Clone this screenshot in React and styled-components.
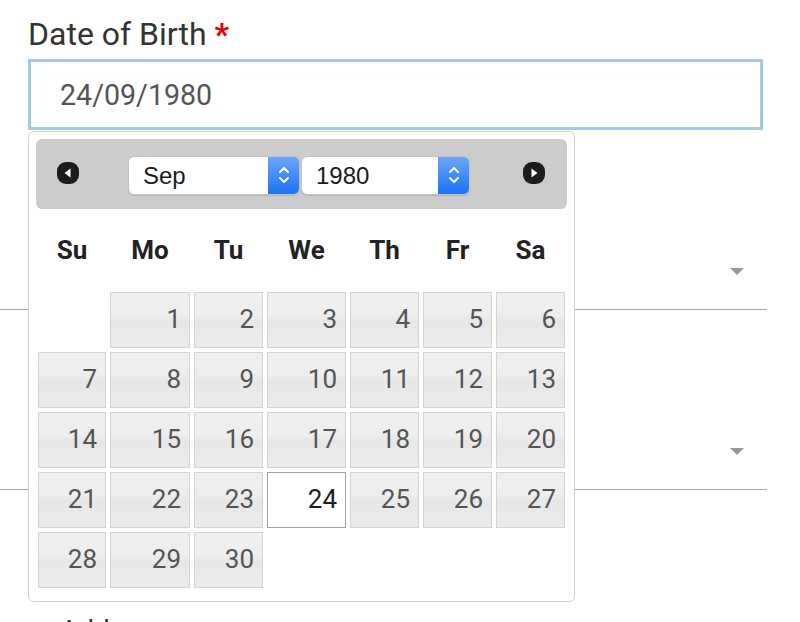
import styled, { createGlobalStyle } from "styled-components";

const GlobalStyle = createGlobalStyle`
  html, body {
    margin: 0;
    padding: 0;
    background: #fff;
    overflow: hidden;
  }
  body {
    font-family: Roboto, "Liberation Sans", sans-serif;
  }
`;

const days = [
    null, 1, 2, 3, 4, 5, 6,
    7, 8, 9, 10, 11, 12, 13,
    14, 15, 16, 17, 18, 19, 20,
    21, 22, 23, 24, 25, 26, 27,
    28, 29, 30,
];

const weekdays = ["Su", "Mo", "Tu", "We", "Th", "Fr", "Sa"];

const Arrow = ({ dir }) => (
    <svg width="22" height="22" viewBox="0 0 22 22">
        <rect x="0" y="0" width="22" height="22" rx="9" fill="#1c1c1c" />
        {dir === "prev"
            ? <path d="M7.5 11 L13.5 6.5 L13.5 15.5 Z" fill="#fff" />
            : <path d="M14.5 11 L8.5 6.5 L8.5 15.5 Z" fill="#fff" />}
    </svg>
);

const Stepper = () => (
    <svg width="14" height="24" viewBox="0 0 14 24" fill="none" stroke="#fff" strokeWidth="2" strokeLinecap="round" strokeLinejoin="round">
        <path d="M3 9 L7 5 L11 9" />
        <path d="M3 15 L7 19 L11 15" />
    </svg>
);

export default function App() {
    return (
        <Page>
            <GlobalStyle />
            <Label>Date of Birth <Required>*</Required></Label>
            <DateInput>24/09/1980</DateInput>

            <Field><Caret /></Field>
            <Field><Caret /></Field>
            <NextLabel>Address</NextLabel>

            <Picker>
                <PickerHeader>
                    <NavButton><Arrow dir="prev" /></NavButton>
                    <Selects>
                        <Select $width={172}>
                            <SelectText>Sep</SelectText>
                            <SelectStep><Stepper /></SelectStep>
                        </Select>
                        <Select $width={169}>
                            <SelectText>1980</SelectText>
                            <SelectStep><Stepper /></SelectStep>
                        </Select>
                    </Selects>
                    <NavButton><Arrow dir="next" /></NavButton>
                </PickerHeader>

                <WeekRow>
                    {weekdays.map(w => <WeekDay key={w}>{w}</WeekDay>)}
                </WeekRow>

                <DayGrid>
                    {days.map((d, i) => d === null
                        ? <Blank key={i} />
                        : <Day key={i} $current={d === 24}>{d}</Day>)}
                </DayGrid>
            </Picker>
        </Page>
    );
}

const Page = styled.div`
    position: relative;
    width: 800px;
    height: 622px;
    padding-top: 14px;
    box-sizing: border-box;
`

const Label = styled.div`
    margin-left: 28px;
    font-size: 32px;
    line-height: 41px;
    color: #333;
    height: 45px;
`

const Required = styled.span`
    color: #e60000;
    font-weight: bold;
`

const DateInput = styled.div`
    margin-left: 28px;
    width: 735px;
    height: 71px;
    box-sizing: border-box;
    border: 3px solid #a4c8e6;
    padding-left: 29px;
    display: flex;
    align-items: center;
    font-size: 28.6px;
    color: #555;
`

const Field = styled.div`
    width: 767px;
    height: 180px;
    border-bottom: 1px solid #a8a8a8;
    display: flex;
    justify-content: flex-end;
    align-items: flex-end;
    padding: 0 23px 34px 0;
    box-sizing: border-box;
`

const Caret = styled.div`
    width: 0;
    height: 0;
    border-left: 7px solid transparent;
    border-right: 7px solid transparent;
    border-top: 7px solid #999;
`

const NextLabel = styled.div`
    margin: 124px 0 0 60px;
    font-size: 28px;
    color: #333;
`

const Picker = styled.div`
    position: absolute;
    left: 28px;
    top: 131px;
    width: 547px;
    height: 471px;
    box-sizing: border-box;
    background: #fff;
    border: 1px solid #d0d0d0;
    border-radius: 6px;
    padding: 7px;
`

const PickerHeader = styled.div`
    height: 70px;
    background: #cccccc;
    border-radius: 6px;
    display: flex;
    align-items: center;
    justify-content: space-between;
    padding: 2px 22px 0 21px;
    box-sizing: border-box;
`

const NavButton = styled.div`
    display: flex;
    width: 22px;
    height: 22px;
    margin-top: -4px;
`

const Selects = styled.div`
    display: flex;
    gap: 1px;
    margin-right: 4px;
`

const Select = styled.div`
    width: ${p => p.$width}px;
    height: 39px;
    box-sizing: border-box;
    display: flex;
    background: #fff;
    border: 1px solid #c2c2c2;
    border-radius: 6px;
    overflow: hidden;
    box-shadow: 0 1px 1px rgba(0, 0, 0, 0.12);
`

const SelectText = styled.div`
    flex: 1;
    padding-left: 14px;
    display: flex;
    align-items: center;
    font-family: "Liberation Sans", Arial, sans-serif;
    font-size: 24px;
    color: #1a1a1a;
    padding-top: 2px;
`

const SelectStep = styled.div`
    width: 31px;
    display: flex;
    align-items: center;
    justify-content: center;
    background: linear-gradient(to bottom, #6aa6f8, #1a73f5);
`

const columns = "68px 80px 69px 79px 69px 69px 69px";

const WeekRow = styled.div`
    display: grid;
    grid-template-columns: ${columns};
    column-gap: 4px;
    height: 83px;
    align-items: center;
    margin: 0 2px;
`

const WeekDay = styled.div`
    text-align: center;
    font-weight: bold;
    font-size: 26px;
    color: #222;
    padding-bottom: 2px;
`

const DayGrid = styled.div`
    display: grid;
    grid-template-columns: ${columns};
    grid-auto-rows: 56px;
    column-gap: 4px;
    row-gap: 4px;
    margin: 0 2px;
`

const Blank = styled.div``

const Day = styled.div`
    box-sizing: border-box;
    border: 1px solid ${p => p.$current ? "#a3a3a3" : "#d3d3d3"};
    background: ${p => p.$current
        ? "#fff"
        : "linear-gradient(to bottom, #efefef 0%, #eeeeee 40%, #e7e7e7 52%, #ececec 100%)"};
    color: ${p => p.$current ? "#1e1e1e" : "#555"};
    font-size: 26px;
    display: flex;
    align-items: center;
    justify-content: flex-end;
    padding: 0 8px 2px 0;
`
